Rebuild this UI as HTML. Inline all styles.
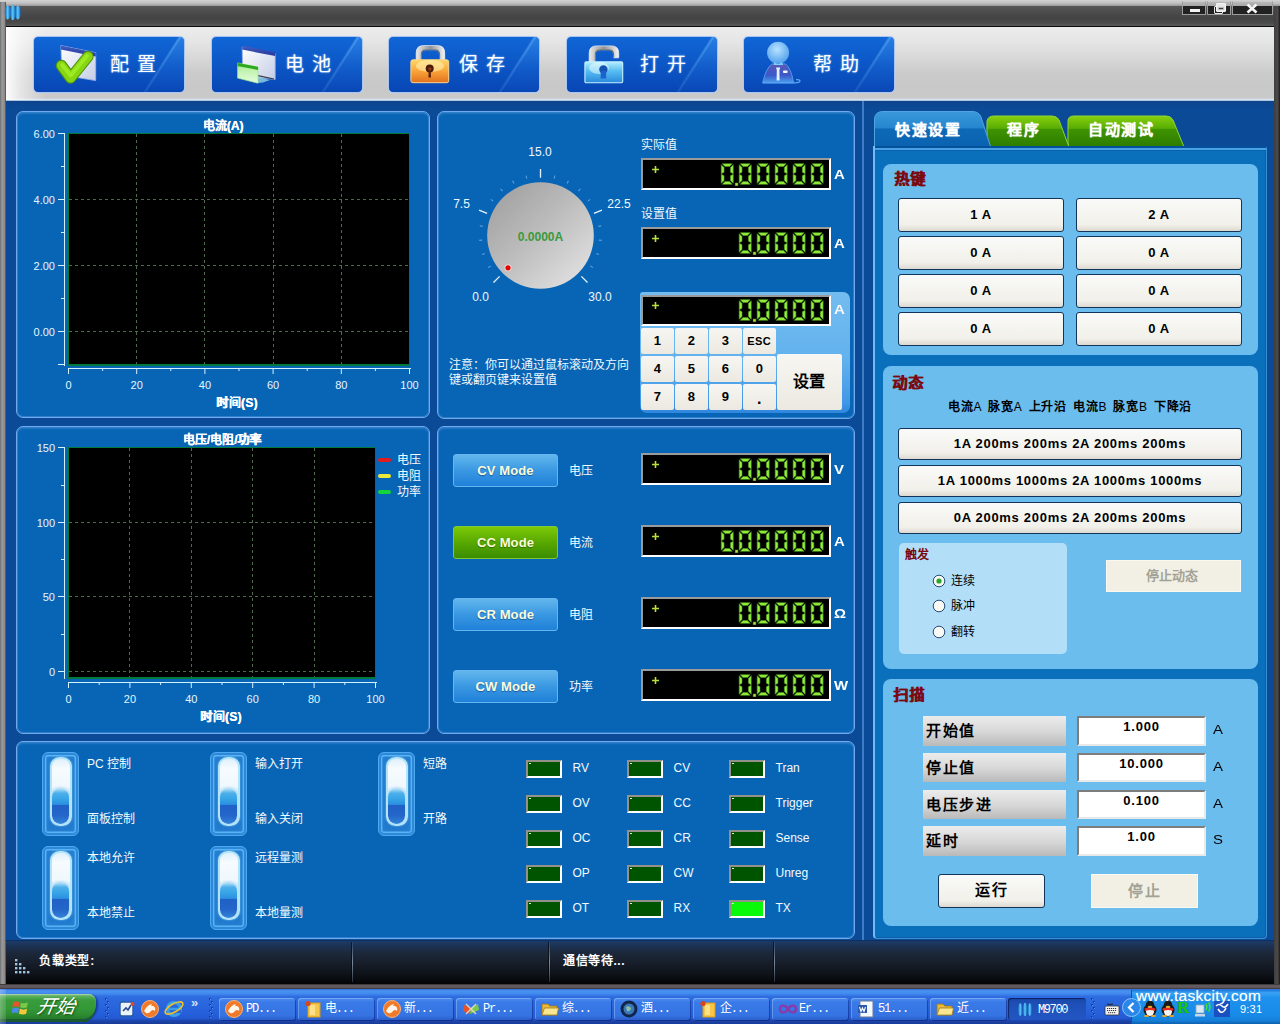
<!DOCTYPE html>
<html lang="zh-CN"><head><meta charset="utf-8"><title>M9700</title>
<style>
html,body{margin:0;padding:0}
body{width:1280px;height:1024px;position:relative;overflow:hidden;background:#0b4a96;
 font-family:"Liberation Sans",sans-serif;font-size:12px;color:#fff}
div{position:absolute;box-sizing:border-box}
svg{position:absolute;overflow:visible}
.t{white-space:nowrap;line-height:14px}
.b{font-weight:bold}
.panel{border:1px solid #70aaec;border-radius:7px;background:#0865b5;
 box-shadow:inset 0 0 0 1px #2f7ecb, inset 0 2px 2px rgba(120,180,240,.25)}
.lcd{background:#000;border:2px solid;border-color:#9a9a9a #fff #fff #9a9a9a}
.tb{border:1px solid #a9c6f2;border-radius:5px;box-shadow:0 0 1px #c8dcf8;overflow:hidden;
 background:linear-gradient(180deg,#1166d6 0%,#0c58c8 45%,#0846b4 100%)}
.tb .sh{left:0;top:0;width:150px;height:55px;clip-path:polygon(146px 0,150px 0,150px 55px,111px 55px);
 background:linear-gradient(180deg,rgba(70,160,245,.42),rgba(40,120,225,.22) 55%,rgba(20,80,200,.05))}
.tb .sl{left:0;top:0;width:150px;height:55px;clip-path:polygon(144.5px 0,147.5px 0,112.5px 55px,109.5px 55px);
 background:linear-gradient(180deg,rgba(120,190,250,.4),rgba(90,160,240,.18));filter:blur(.6px)}
.tbt{font-size:19px;line-height:24px;letter-spacing:8px;font-weight:500;color:#fff;white-space:nowrap;
 text-shadow:0 0 2px #9cf}
.mode{border-radius:3px;border:1px solid #64b6f2;background:linear-gradient(180deg,#62b6ec 0%,#3a98e2 50%,#1f80d8 100%);
 text-align:center;font-weight:bold;font-size:13px;line-height:31px;color:#fcfcdc;letter-spacing:.1px;
 text-shadow:0 1px 1px rgba(0,40,100,.5)}
.mode.g{border-color:#7fc83a;background:linear-gradient(180deg,#7cc908 0%,#58a800 50%,#3b8d00 100%);text-shadow:0 1px 1px rgba(20,60,0,.5)}
.key{background:linear-gradient(180deg,#f7f6f2,#ebe9e0);border-radius:2px;color:#000;text-align:center;
 font-weight:bold;font-size:13px;line-height:26px}
.hb{background:linear-gradient(180deg,#fafaf8 0%,#f1f0ea 80%,#dcdad0 100%);border:1px solid #12345a;border-radius:3px;color:#000;
 text-align:center;font-weight:bold;font-size:13px;line-height:31px;letter-spacing:.6px}
.grp{background:#6bbdee;border-radius:8px}
.gt{font-weight:bold;font-size:15px;line-height:18px;color:#7b0a10;white-space:nowrap;letter-spacing:1px;text-shadow:.5px 0 0 #7b0a10}
.lbl{background:linear-gradient(180deg,#ececec 0%,#d6d6d6 55%,#b9b9b9 100%);color:#000;font-weight:bold;font-size:15px;
 line-height:29px;padding-left:3px;letter-spacing:1.5px;white-space:nowrap}
.inp{background:#fff;border:2px solid;border-color:#7d7d7d #e9e9e9 #e9e9e9 #7d7d7d;color:#000;font-weight:bold;font-size:13px;
 text-align:center;line-height:18px;letter-spacing:.8px}
.led{background:#005400;border:2px solid;border-color:#92928a #fff #fff #92928a}
.sw{border-radius:6px;border:1.5px solid #4ea8f0;background:#2079cc;
 box-shadow:inset 0 0 0 2px #2c88d8, inset 0 0 0 3.4px #5ab2f2, inset 0 0 5px 4px #2c86d6}
.swi{border-radius:9.5px;border:2px solid #b2e4fc;background:linear-gradient(180deg,#dff0fa 0%,#f6fbfe 14%,#f0f8fd 42%,#d4ecfa 50%,#bfe6fb 100%);
 overflow:hidden;box-shadow:0 0 2px #7cc8f8}
.swt{left:.5px;top:30px;width:17px;height:35px;border-radius:8px 8px 8.5px 8.5px;
 background:linear-gradient(180deg,#a8dcf6 0%,#4cb0ea 12%,#36a2e6 30%,#2c90e0 44%,#2160c6 47%,#2466ca 76%,#3484d8 100%);
 box-shadow:0 -1px 3px rgba(120,190,240,.7)}
.task{top:998px;height:22px;width:76px;border-radius:3px;background:linear-gradient(180deg,#4d8df0 0%,#3a7ae8 20%,#3573e2 80%,#2a60cc 100%);
 box-shadow:inset 1px 1px 0 rgba(255,255,255,.25), 1px 1px 0 rgba(0,0,60,.3)}
.task span{position:absolute;left:27px;top:4px;font-size:12px;line-height:14px;color:#fff;white-space:nowrap;font-family:"Liberation Mono",monospace;letter-spacing:-1.2px}
</style></head>
<body>

<svg width="0" height="0" style="left:0;top:0"><defs>
<linearGradient id="wing" x1="0" y1="0" x2="1" y2="1"><stop offset="0" stop-color="#ffffff"/><stop offset="1" stop-color="#c4cde6"/></linearGradient>
<linearGradient id="wint" x1="0" y1="0" x2="0" y2="1"><stop offset="0" stop-color="#4260c4"/><stop offset="1" stop-color="#22369a"/></linearGradient>
<linearGradient id="chk" x1="0" y1="0" x2="0" y2="1"><stop offset="0" stop-color="#b6e62a"/><stop offset=".6" stop-color="#6db40c"/><stop offset="1" stop-color="#4e9208"/></linearGradient>
<linearGradient id="grn" x1="0" y1="0" x2="0" y2="1"><stop offset="0" stop-color="#4fc23c"/><stop offset=".25" stop-color="#b8f0a6"/><stop offset="1" stop-color="#e6ffdc"/></linearGradient>
<linearGradient id="lko" x1="0" y1="0" x2="0" y2="1"><stop offset="0" stop-color="#ffd86a"/><stop offset=".45" stop-color="#fba93c"/><stop offset="1" stop-color="#e2701e"/></linearGradient>
<linearGradient id="lkb" x1="0" y1="0" x2="0" y2="1"><stop offset="0" stop-color="#b4ecff"/><stop offset=".45" stop-color="#56bcf0"/><stop offset="1" stop-color="#2a8ade"/></linearGradient>
<linearGradient id="shk" x1="0" y1="0" x2="1" y2="0"><stop offset="0" stop-color="#e8e8e8"/><stop offset=".5" stop-color="#8e9298"/><stop offset="1" stop-color="#f4f4f4"/></linearGradient>
<radialGradient id="hd" cx=".45" cy=".35" r=".7"><stop offset="0" stop-color="#b8e2ff"/><stop offset="1" stop-color="#4a9cec"/></radialGradient>
<linearGradient id="bd" x1="0" y1="0" x2="0" y2="1"><stop offset="0" stop-color="#5a5ab8"/><stop offset=".6" stop-color="#3a58c8"/><stop offset="1" stop-color="#4aa0f0"/></linearGradient>
</defs></svg>


<svg width="0" height="0" style="left:0;top:0"><defs>
<symbol id="d0" viewBox="0 0 13 22" overflow="visible">
<g fill="#94ee3c" stroke="#4c9a1e" stroke-width=".6" stroke-linejoin="round">
<path d="M1.4 .3 L11.6 .3 L8.9 3.2 L4.1 3.2 Z"/>
<path d="M.3 1.4 L3.2 4.4 L3.2 9.3 L.3 10.7 Z"/>
<path d="M12.7 1.4 L12.7 10.7 L9.8 9.3 L9.8 4.4 Z"/>
<path d="M.3 11.3 L3.2 12.7 L3.2 17.6 L.3 20.6 Z"/>
<path d="M12.7 11.3 L12.7 20.6 L9.8 17.6 L9.8 12.7 Z"/>
<path d="M1.4 21.7 L4.1 18.8 L8.9 18.8 L11.6 21.7 Z"/>
</g></symbol>
</defs></svg>

<div style="left:6px;top:100px;width:1268px;height:842px;background:linear-gradient(180deg,#0a3878 0px,#0c4590 2px,#0b4a96 9px,#0b4a96 100%)"></div>
<div style="left:0px;top:0px;width:1280px;height:6px;background:linear-gradient(180deg,#d4d4d4 0%,#c8c8c8 30%,#c0c0c0 55%,#a8a8a8 80%,#989898 100%)"></div>
<div style="left:0px;top:6px;width:1280px;height:20px;background:linear-gradient(180deg,#585858 0%,#4c4c4c 30%,#434343 60%,#4a4a4a 85%,#5a5a5a 100%)"></div>
<div style="left:0px;top:26px;width:1280px;height:1px;background:#0a0a0a"></div>
<div style="left:0px;top:2px;width:6px;height:988px;background:linear-gradient(90deg,#6a7074 0%,#9b9b9b 35%,#8f8884 80%,#3a3a3a 100%)"></div>
<div style="left:1274px;top:6px;width:6px;height:984px;background:linear-gradient(90deg,#3f3f3f 0%,#4d4948 60%,#1a1a1a 100%)"></div>
<svg style="left:4px;top:4px" width="17.5" height="17" viewBox="0 0 16 16"><defs><linearGradient id="ai" x1="0" x2="1"><stop offset="0" stop-color="#0f5eb0"/><stop offset=".5" stop-color="#5ccaff"/><stop offset="1" stop-color="#0f5eb0"/></linearGradient></defs><ellipse cx="3.2" cy="8" rx="2.7" ry="6.6" fill="url(#ai)"/><ellipse cx="8" cy="8" rx="2.7" ry="7.2" fill="url(#ai)"/><ellipse cx="12.8" cy="8" rx="2.7" ry="6.6" fill="url(#ai)"/></svg>
<div style="left:1182px;top:1px;width:24px;height:14px;background:#222;border:1px solid #9c9c9c;border-top-color:#c9c9c9"><div style="left:0;top:0;width:100%;height:4px;background:linear-gradient(180deg,#cdcdcd,#b9b9b9);opacity:.88"></div><div style="left:7px;top:7px;width:10px;height:3px;background:#f4f4f4"></div></div>
<div style="left:1207px;top:1px;width:24px;height:14px;background:#222;border:1px solid #9c9c9c;border-top-color:#c9c9c9"><div style="left:0;top:0;width:100%;height:4px;background:linear-gradient(180deg,#cdcdcd,#b9b9b9);opacity:.88"></div><div style="left:6px;top:4px;width:9px;height:8px;border:1px solid #e8e8e8;border-radius:1px"></div><div style="left:8px;top:1px;width:10px;height:9px;border:1px solid #f4f4f4;background:#e6e6e6;border-radius:1px"></div><div style="left:10px;top:5px;width:6px;height:3px;background:#3a3a3a;border:1px solid #bbb"></div></div>
<div style="left:1232px;top:1px;width:41px;height:14px;background:#222;border:1px solid #9c9c9c;border-top-color:#c9c9c9"><div style="left:0;top:0;width:100%;height:4px;background:linear-gradient(180deg,#cdcdcd,#b9b9b9);opacity:.88"></div><svg style="left:13px;top:2px" width="12" height="9" viewBox="0 0 12 9"><path d="M1.5 0.5 L10.5 8.5 M10.5 0.5 L1.5 8.5" stroke="#f6f6f6" stroke-width="2.6"/></svg></div>
<div style="left:6px;top:27px;width:1268px;height:74px;background:linear-gradient(180deg,#ececec 0%,#e6e6e6 18%,#d6d6d6 45%,#cbcbcb 62%,#c8c8c8 80%,#c9c9c9 96%,#d4e2f2 98%,#9db8d8 100%)"></div>
<div style="left:6px;top:27px;width:40px;height:73px;background:linear-gradient(90deg,rgba(255,255,255,.95) 0%,rgba(255,255,255,.55) 35%,rgba(255,255,255,0) 100%)"></div>
<div class="tb" style="left:33px;top:36px;width:152px;height:57px;"><div class="sh"></div><div class="sl"></div><svg style="left:23px;top:6px" width="42" height="44" viewBox="0 0 42 44"><path d="M3.9 2.6 L38.7 9.7 L38.7 37.6 L5 32 Z" fill="url(#wing)" stroke="#9fb4ee" stroke-width=".8"/><path d="M3.9 2.6 L38.7 9.7 L38.7 13.4 L3.9 6.6 Z" fill="url(#wint)"/><path d="M4.4 22.5 L13.6 35 L31 13.5" fill="none" stroke="#4e8f12" stroke-width="11.4" stroke-linecap="round" stroke-linejoin="round"/><path d="M4.4 22.5 L13.6 35 L31 13.5" fill="none" stroke="#86d612" stroke-width="9.2" stroke-linecap="round" stroke-linejoin="round"/><path d="M5.2 22 L13.6 32.5 L30 13" fill="none" stroke="#a6f028" stroke-width="3.8" stroke-linecap="round" stroke-linejoin="round" opacity=".75"/></svg><div class="tbt" style="left:76px;top:16px">配置</div></div>
<div class="tb" style="left:211px;top:36px;width:152px;height:57px;"><div class="sh"></div><div class="sl"></div><svg style="left:23px;top:6px" width="42" height="44" viewBox="0 0 42 44"><path d="M7.2 4 L40.2 10.5 L40.2 36.6 L7.7 33 Z" fill="url(#wing)" stroke="#8fb0f0" stroke-width=".8"/><path d="M7.2 4.6 Q7.2 2.2 9.5 2.9 L40.2 9.2 L40.2 13 L7.2 6.6 Z" fill="url(#wint)"/><path d="M23 34.5 L35 37 L28 39.6 L23 40 Z" fill="#a8e8e8" opacity=".7"/><path d="M23 32.6 L39 36.2" stroke="#39404c" stroke-width="1.2"/><path d="M2.6 19.9 L23 23.9 L23 40.2 L2.6 35.1 Z" fill="url(#grn)" stroke="#9fe68c" stroke-width=".7"/><path d="M2.6 19.9 L23 23.9 L23 27 L2.6 23 Z" fill="#2ea81c"/></svg><div class="tbt" style="left:73px;top:16px">电池</div></div>
<div class="tb" style="left:388px;top:36px;width:152px;height:57px;"><div class="sh"></div><div class="sl"></div><svg style="left:21px;top:8px" width="42" height="42" viewBox="0 0 42 42"><path d="M6.2 16 V8 Q6.2 .6 13.5 .6 H27.5 Q34.7 .6 34.7 8 V16 H29.6 V9.5 Q29.6 4.7 24.8 4.7 H16.2 Q11.3 4.7 11.3 9.5 V16 Z" fill="url(#shk)" stroke="#f4f4f8" stroke-width=".7"/><path d="M11.3 16 V9.5 Q11.3 4.7 16.2 4.7 H24.8 Q29.6 4.7 29.6 9.5 V16" fill="none" stroke="#6a6e78" stroke-width="1.1"/><rect x=".9" y="14.8" width="37.8" height="22.9" rx="2" fill="url(#lko)" stroke="#fad68c" stroke-width="1"/><ellipse cx="20" cy="21" rx="14" ry="6" fill="#fff6b8" opacity=".55"/><circle cx="19.7" cy="23.5" r="4" fill="#4a1a08"/><path d="M18.7 25 L18.4 32.6 L21 32.6 L20.7 25 Z" fill="#5a2208"/><circle cx="19.9" cy="23.8" r="1.6" fill="#8a3a12"/></svg><div class="tbt" style="left:70px;top:16px">保存</div></div>
<div class="tb" style="left:566px;top:36px;width:152px;height:57px;"><div class="sh"></div><div class="sl"></div><svg style="left:17px;top:8px" width="42" height="42" viewBox="0 0 42 42"><path d="M5.2 18 V8 Q5.2 .9 12.5 .9 H27.5 Q34.7 .9 34.7 8 V12.8 H29.6 V9.5 Q29.6 4.7 24.8 4.7 H16.2 Q11.3 4.7 11.3 9.5 V18 Z" fill="url(#shk)" stroke="#f4f4f8" stroke-width=".7"/><path d="M11.3 17 V9.5 Q11.3 4.7 16.2 4.7 H24.8 Q29.6 4.7 29.6 9.5 V12.6" fill="none" stroke="#7a6e60" stroke-width="1.1"/><rect x=".9" y="16.9" width="37.8" height="20.8" rx="1.2" fill="url(#lkb)" stroke="#c4f2ff" stroke-width="1.1"/><ellipse cx="15" cy="23" rx="10" ry="6" fill="#e8ffff" opacity=".55"/><circle cx="19.4" cy="24.5" r="4.2" fill="#1552b4"/><path d="M16.8 26 L16.6 33.6 L22.2 33.6 L22 26 Z" fill="#1c62cc"/></svg><div class="tbt" style="left:73px;top:16px">打开</div></div>
<div class="tb" style="left:743px;top:36px;width:152px;height:57px;"><div class="sh"></div><div class="sl"></div><svg style="left:17px;top:4px" width="42" height="46" viewBox="0 0 42 46"><path d="M1.6 41.7 Q5 27 11 22.9 L24.5 22.9 Q30 27 32.6 41.7 Z" fill="url(#bd)" stroke="#5a9cf0" stroke-width=".9"/><circle cx="17.1" cy="11.7" r="11" fill="url(#hd)"/><path d="M13.5 21 Q17 25 21 21 L22 24 L12.5 24 Z" fill="#7ed0f8"/><path d="M15.2 26.6 H19 V28.2 H18.4 L18.6 39.5 L15.6 39.5 L15.8 28.2 H15.2 Z" fill="#e2f0ff"/><rect x="22" y="29.5" width="4.6" height="2.4" rx="1" fill="#f4f8ff"/><path d="M1.6 41.9 H33 Q39 42 39 40 Q39 38.4 35 38.6" fill="none" stroke="#5aa8f4" stroke-width="1.3"/></svg><div class="tbt" style="left:69px;top:16px">帮助</div></div>
<div class="panel" style="left:16px;top:111px;width:414px;height:307px;"><svg style="left:0;top:0" width="412" height="305" viewBox="0 0 412 305"><rect x="51" y="21" width="342" height="233" fill="#000"/><line x1="119.5" y1="22" x2="119.5" y2="253" stroke="#4d6a4a" stroke-width="1" stroke-dasharray="3 3"/><line x1="187.5" y1="22" x2="187.5" y2="253" stroke="#4d6a4a" stroke-width="1" stroke-dasharray="3 3"/><line x1="256.5" y1="22" x2="256.5" y2="253" stroke="#4d6a4a" stroke-width="1" stroke-dasharray="3 3"/><line x1="324.5" y1="22" x2="324.5" y2="253" stroke="#4d6a4a" stroke-width="1" stroke-dasharray="3 3"/><line x1="52" y1="87.5" x2="392" y2="87.5" stroke="#4d6a4a" stroke-width="1" stroke-dasharray="3 3"/><line x1="52" y1="153.5" x2="392" y2="153.5" stroke="#4d6a4a" stroke-width="1" stroke-dasharray="3 3"/><line x1="52" y1="219.5" x2="392" y2="219.5" stroke="#4d6a4a" stroke-width="1" stroke-dasharray="3 3"/><rect x="51.5" y="21.5" width="341" height="232" fill="none" stroke="#007a3c" stroke-width="1"/><line x1="51" y1="252.5" x2="393" y2="252.5" stroke="#007a3c" stroke-width="1"/><line x1="47.5" y1="21" x2="47.5" y2="254" stroke="#d2f2ff" stroke-width="1"/><line x1="41" y1="21.5" x2="48" y2="21.5" stroke="#d2f2ff" stroke-width="1"/><line x1="41" y1="87.5" x2="48" y2="87.5" stroke="#d2f2ff" stroke-width="1"/><line x1="41" y1="153.5" x2="48" y2="153.5" stroke="#d2f2ff" stroke-width="1"/><line x1="41" y1="219.5" x2="48" y2="219.5" stroke="#d2f2ff" stroke-width="1"/><line x1="41" y1="252.5" x2="48" y2="252.5" stroke="#d2f2ff" stroke-width="1"/><line x1="44" y1="54.5" x2="48" y2="54.5" stroke="#d2f2ff" stroke-width="1"/><line x1="44" y1="120.5" x2="48" y2="120.5" stroke="#d2f2ff" stroke-width="1"/><line x1="44" y1="186.5" x2="48" y2="186.5" stroke="#d2f2ff" stroke-width="1"/><line x1="51" y1="256.5" x2="394" y2="256.5" stroke="#d2f2ff" stroke-width="1"/><line x1="51.50" y1="256" x2="51.50" y2="262" stroke="#d2f2ff" stroke-width="1"/><line x1="85.60" y1="256" x2="85.60" y2="259" stroke="#d2f2ff" stroke-width="1"/><line x1="119.70" y1="256" x2="119.70" y2="262" stroke="#d2f2ff" stroke-width="1"/><line x1="153.80" y1="256" x2="153.80" y2="259" stroke="#d2f2ff" stroke-width="1"/><line x1="187.90" y1="256" x2="187.90" y2="262" stroke="#d2f2ff" stroke-width="1"/><line x1="222.00" y1="256" x2="222.00" y2="259" stroke="#d2f2ff" stroke-width="1"/><line x1="256.10" y1="256" x2="256.10" y2="262" stroke="#d2f2ff" stroke-width="1"/><line x1="290.20" y1="256" x2="290.20" y2="259" stroke="#d2f2ff" stroke-width="1"/><line x1="324.30" y1="256" x2="324.30" y2="262" stroke="#d2f2ff" stroke-width="1"/><line x1="358.40" y1="256" x2="358.40" y2="259" stroke="#d2f2ff" stroke-width="1"/><line x1="392.50" y1="256" x2="392.50" y2="262" stroke="#d2f2ff" stroke-width="1"/></svg><div class="t" style="right:374px;top:15px;color:#e4f6ff;font-size:11px">6.00</div><div class="t" style="right:374px;top:80.5px;color:#e4f6ff;font-size:11px">4.00</div><div class="t" style="right:374px;top:146.5px;color:#e4f6ff;font-size:11px">2.00</div><div class="t" style="right:374px;top:212.5px;color:#e4f6ff;font-size:11px">0.00</div><div class="t" style="left:31.0px;width:41px;text-align:center;top:266px;color:#e4f6ff;font-size:11px">0</div><div class="t" style="left:99.2px;width:41px;text-align:center;top:266px;color:#e4f6ff;font-size:11px">20</div><div class="t" style="left:167.4px;width:41px;text-align:center;top:266px;color:#e4f6ff;font-size:11px">40</div><div class="t" style="left:235.6px;width:41px;text-align:center;top:266px;color:#e4f6ff;font-size:11px">60</div><div class="t" style="left:303.8px;width:41px;text-align:center;top:266px;color:#e4f6ff;font-size:11px">80</div><div class="t" style="left:372.0px;width:41px;text-align:center;top:266px;color:#e4f6ff;font-size:11px">100</div><div class="t b" style="left:146px;width:120px;text-align:center;top:7px;text-shadow:.4px 0 0 #fff">电流(A)</div><div class="t b" style="left:160px;width:120px;text-align:center;top:284px;letter-spacing:.3px;text-shadow:.4px 0 0 #fff">时间(S)</div></div>
<div class="panel" style="left:16px;top:426px;width:414px;height:308px;"><svg style="left:0;top:0" width="412" height="306" viewBox="0 0 412 306"><rect x="51" y="20" width="308" height="232" fill="#000"/><line x1="112.5" y1="21" x2="112.5" y2="251" stroke="#4d6a4a" stroke-width="1" stroke-dasharray="3 3"/><line x1="174.5" y1="21" x2="174.5" y2="251" stroke="#4d6a4a" stroke-width="1" stroke-dasharray="3 3"/><line x1="235.5" y1="21" x2="235.5" y2="251" stroke="#4d6a4a" stroke-width="1" stroke-dasharray="3 3"/><line x1="297.5" y1="21" x2="297.5" y2="251" stroke="#4d6a4a" stroke-width="1" stroke-dasharray="3 3"/><line x1="52" y1="95.5" x2="358" y2="95.5" stroke="#4d6a4a" stroke-width="1" stroke-dasharray="3 3"/><line x1="52" y1="169.5" x2="358" y2="169.5" stroke="#4d6a4a" stroke-width="1" stroke-dasharray="3 3"/><line x1="52" y1="244.5" x2="358" y2="244.5" stroke="#4d6a4a" stroke-width="1" stroke-dasharray="3 3"/><rect x="51.5" y="20.5" width="307" height="231" fill="none" stroke="#007a3c" stroke-width="1"/><line x1="51" y1="250.5" x2="359" y2="250.5" stroke="#007a3c" stroke-width="1"/><line x1="47.5" y1="20" x2="47.5" y2="252" stroke="#d2f2ff" stroke-width="1"/><line x1="41" y1="20.5" x2="48" y2="20.5" stroke="#d2f2ff" stroke-width="1"/><line x1="41" y1="95.5" x2="48" y2="95.5" stroke="#d2f2ff" stroke-width="1"/><line x1="41" y1="169.5" x2="48" y2="169.5" stroke="#d2f2ff" stroke-width="1"/><line x1="41" y1="244.5" x2="48" y2="244.5" stroke="#d2f2ff" stroke-width="1"/><line x1="44" y1="58.5" x2="48" y2="58.5" stroke="#d2f2ff" stroke-width="1"/><line x1="44" y1="132.5" x2="48" y2="132.5" stroke="#d2f2ff" stroke-width="1"/><line x1="44" y1="207.5" x2="48" y2="207.5" stroke="#d2f2ff" stroke-width="1"/><line x1="51" y1="255.5" x2="360" y2="255.5" stroke="#d2f2ff" stroke-width="1"/><line x1="51.50" y1="255" x2="51.50" y2="261" stroke="#d2f2ff" stroke-width="1"/><line x1="82.20" y1="255" x2="82.20" y2="258" stroke="#d2f2ff" stroke-width="1"/><line x1="112.90" y1="255" x2="112.90" y2="261" stroke="#d2f2ff" stroke-width="1"/><line x1="143.60" y1="255" x2="143.60" y2="258" stroke="#d2f2ff" stroke-width="1"/><line x1="174.30" y1="255" x2="174.30" y2="261" stroke="#d2f2ff" stroke-width="1"/><line x1="205.00" y1="255" x2="205.00" y2="258" stroke="#d2f2ff" stroke-width="1"/><line x1="235.70" y1="255" x2="235.70" y2="261" stroke="#d2f2ff" stroke-width="1"/><line x1="266.40" y1="255" x2="266.40" y2="258" stroke="#d2f2ff" stroke-width="1"/><line x1="297.10" y1="255" x2="297.10" y2="261" stroke="#d2f2ff" stroke-width="1"/><line x1="327.80" y1="255" x2="327.80" y2="258" stroke="#d2f2ff" stroke-width="1"/><line x1="358.50" y1="255" x2="358.50" y2="261" stroke="#d2f2ff" stroke-width="1"/></svg><div class="t" style="right:374px;top:13.5px;color:#e4f6ff;font-size:11px">150</div><div class="t" style="right:374px;top:88.5px;color:#e4f6ff;font-size:11px">100</div><div class="t" style="right:374px;top:162.5px;color:#e4f6ff;font-size:11px">50</div><div class="t" style="right:374px;top:237.5px;color:#e4f6ff;font-size:11px">0</div><div class="t" style="left:31.0px;width:41px;text-align:center;top:264.5px;color:#e4f6ff;font-size:11px">0</div><div class="t" style="left:92.4px;width:41px;text-align:center;top:264.5px;color:#e4f6ff;font-size:11px">20</div><div class="t" style="left:153.8px;width:41px;text-align:center;top:264.5px;color:#e4f6ff;font-size:11px">40</div><div class="t" style="left:215.2px;width:41px;text-align:center;top:264.5px;color:#e4f6ff;font-size:11px">60</div><div class="t" style="left:276.6px;width:41px;text-align:center;top:264.5px;color:#e4f6ff;font-size:11px">80</div><div class="t" style="left:338.0px;width:41px;text-align:center;top:264.5px;color:#e4f6ff;font-size:11px">100</div><div class="t b" style="left:145px;width:120px;text-align:center;top:6px;text-shadow:.4px 0 0 #fff">电压/电阻/功率</div><div class="t b" style="left:144px;width:120px;text-align:center;top:283px;letter-spacing:.3px;text-shadow:.4px 0 0 #fff">时间(S)</div><div style="left:361px;top:31px;width:13px;height:4px;background:#e21c1c;border-radius:2px"></div><div class="t" style="left:380px;top:26px;color:#f2fbff">电压</div><div style="left:361px;top:47px;width:13px;height:4px;background:#ece83a;border-radius:2px"></div><div class="t" style="left:380px;top:42px;color:#f2fbff">电阻</div><div style="left:361px;top:63px;width:13px;height:4px;background:#14d43a;border-radius:2px"></div><div class="t" style="left:380px;top:58px;color:#f2fbff">功率</div></div>
<div class="panel" style="left:437px;top:111px;width:418px;height:308px;"></div>
<svg style="left:0;top:0" width="1280" height="1024" viewBox="0 0 1280 1024"><defs><linearGradient id="kg" x1="0.1" y1="0.1" x2="0.9" y2="0.95"><stop offset="0" stop-color="#a2a2a2"/><stop offset=".45" stop-color="#bcbcbc"/><stop offset="1" stop-color="#e2e2e2"/></linearGradient></defs><line x1="499.63" y1="276.37" x2="493.48" y2="282.52" stroke="#e6f4ff" stroke-width="1.3"/><line x1="490.62" y1="266.07" x2="488.06" y2="267.63" stroke="#5aa0e0" stroke-width="1.1"/><line x1="484.86" y1="253.58" x2="482.01" y2="254.50" stroke="#5aa0e0" stroke-width="1.1"/><line x1="482.18" y1="240.09" x2="479.19" y2="240.33" stroke="#5aa0e0" stroke-width="1.1"/><line x1="482.72" y1="226.35" x2="479.76" y2="225.88" stroke="#5aa0e0" stroke-width="1.1"/><line x1="487.10" y1="213.38" x2="479.06" y2="210.05" stroke="#e6f4ff" stroke-width="1.3"/><line x1="493.17" y1="201.11" x2="490.75" y2="199.35" stroke="#5aa0e0" stroke-width="1.1"/><line x1="502.51" y1="191.02" x2="500.56" y2="188.74" stroke="#5aa0e0" stroke-width="1.1"/><line x1="513.94" y1="183.38" x2="512.58" y2="180.70" stroke="#5aa0e0" stroke-width="1.1"/><line x1="526.84" y1="178.62" x2="526.14" y2="175.70" stroke="#5aa0e0" stroke-width="1.1"/><line x1="540.50" y1="177.70" x2="540.50" y2="169.00" stroke="#e6f4ff" stroke-width="1.3"/><line x1="554.16" y1="178.62" x2="554.86" y2="175.70" stroke="#5aa0e0" stroke-width="1.1"/><line x1="567.06" y1="183.38" x2="568.42" y2="180.70" stroke="#5aa0e0" stroke-width="1.1"/><line x1="578.49" y1="191.02" x2="580.44" y2="188.74" stroke="#5aa0e0" stroke-width="1.1"/><line x1="587.83" y1="201.11" x2="590.25" y2="199.35" stroke="#5aa0e0" stroke-width="1.1"/><line x1="593.90" y1="213.38" x2="601.94" y2="210.05" stroke="#e6f4ff" stroke-width="1.3"/><line x1="598.28" y1="226.35" x2="601.24" y2="225.88" stroke="#5aa0e0" stroke-width="1.1"/><line x1="598.82" y1="240.09" x2="601.81" y2="240.33" stroke="#5aa0e0" stroke-width="1.1"/><line x1="596.14" y1="253.58" x2="598.99" y2="254.50" stroke="#5aa0e0" stroke-width="1.1"/><line x1="590.38" y1="266.07" x2="592.94" y2="267.63" stroke="#5aa0e0" stroke-width="1.1"/><line x1="581.37" y1="276.37" x2="587.52" y2="282.52" stroke="#e6f4ff" stroke-width="1.3"/><circle cx="540.5" cy="235.5" r="53.3" fill="url(#kg)"/><circle cx="508" cy="267.8" r="3.4" fill="#f4e6e0"/><circle cx="508" cy="267.8" r="2.6" fill="#e80000"/></svg><div class="t" style="left:510px;width:60px;text-align:center;top:145px;color:#eef8ff">15.0</div><div class="t" style="left:431.5px;width:60px;text-align:center;top:197px;color:#eef8ff">7.5</div><div class="t" style="left:589px;width:60px;text-align:center;top:197px;color:#eef8ff">22.5</div><div class="t" style="left:450.5px;width:60px;text-align:center;top:290px;color:#eef8ff">0.0</div><div class="t" style="left:570px;width:60px;text-align:center;top:290px;color:#eef8ff">30.0</div><div class="t b" style="left:500px;width:81px;text-align:center;top:230px;color:#3a9a3c">0.0000A</div>
<div class="t" style="left:641px;top:138px;color:#eef8ff">实际值</div>
<div class="lcd" style="left:641px;top:158px;width:190px;height:32px;"><svg style="left:-2px;top:-2px" width="190" height="32" viewBox="0 0 190 32"><use href="#d0" x="169.80" y="5" width="12.6" height="22"/><use href="#d0" x="151.83" y="5" width="12.6" height="22"/><use href="#d0" x="133.86" y="5" width="12.6" height="22"/><use href="#d0" x="115.89" y="5" width="12.6" height="22"/><use href="#d0" x="97.92" y="5" width="12.6" height="22"/><use href="#d0" x="79.95" y="5" width="12.6" height="22"/><rect x="94.15" y="25" width="2.8" height="2.8" fill="#b4e63c" stroke="#5a8f1e" stroke-width=".5"/><path d="M11 11.5 H18 M14.5 8 V15" stroke="#b6e23a" stroke-width="1.6" fill="none"/></svg></div>
<div class="t" style="left:834px;top:167px;font-weight:bold;font-size:13px;line-height:15px;transform:scaleX(1.15);transform-origin:0 0">A</div>
<div class="t" style="left:641px;top:207px;color:#eef8ff">设置值</div>
<div class="lcd" style="left:641px;top:227px;width:190px;height:32px;"><svg style="left:-2px;top:-2px" width="190" height="32" viewBox="0 0 190 32"><use href="#d0" x="169.80" y="5" width="12.6" height="22"/><use href="#d0" x="151.83" y="5" width="12.6" height="22"/><use href="#d0" x="133.86" y="5" width="12.6" height="22"/><use href="#d0" x="115.89" y="5" width="12.6" height="22"/><use href="#d0" x="97.92" y="5" width="12.6" height="22"/><rect x="112.12" y="25" width="2.8" height="2.8" fill="#b4e63c" stroke="#5a8f1e" stroke-width=".5"/><path d="M11 11.5 H18 M14.5 8 V15" stroke="#b6e23a" stroke-width="1.6" fill="none"/></svg></div>
<div class="t" style="left:834px;top:236px;font-weight:bold;font-size:13px;line-height:15px;transform:scaleX(1.15);transform-origin:0 0">A</div>
<div class="t" style="left:449px;top:358px;color:#eef8ff;line-height:15px">注意：你可以通过鼠标滚动及方向</div>
<div class="t" style="left:449px;top:373px;color:#eef8ff;line-height:15px">键或翻页键来设置值</div>
<div style="left:640px;top:292px;width:210px;height:121px;border-radius:3px 7px 7px 7px;background:linear-gradient(180deg,#74bcf0 0%,#62b2ee 55%,#4097e6 92%,#2f86de 100%)"></div>
<div class="lcd" style="left:641px;top:295px;width:190px;height:31px;"><svg style="left:-2px;top:-2px" width="190" height="31" viewBox="0 0 190 31"><use href="#d0" x="169.80" y="4" width="12.6" height="22"/><use href="#d0" x="151.83" y="4" width="12.6" height="22"/><use href="#d0" x="133.86" y="4" width="12.6" height="22"/><use href="#d0" x="115.89" y="4" width="12.6" height="22"/><use href="#d0" x="97.92" y="4" width="12.6" height="22"/><rect x="112.12" y="24" width="2.8" height="2.8" fill="#b4e63c" stroke="#5a8f1e" stroke-width=".5"/><path d="M11 10.5 H18 M14.5 7 V14" stroke="#b6e23a" stroke-width="1.6" fill="none"/></svg></div>
<div class="t" style="left:834px;top:302px;font-weight:bold;font-size:13px;line-height:15px;transform:scaleX(1.15);transform-origin:0 0;color:#f4faff">A</div>
<div class="key" style="left:641px;top:328px;width:32.5px;height:26px;">1</div>
<div class="key" style="left:675px;top:328px;width:32.5px;height:26px;">2</div>
<div class="key" style="left:709px;top:328px;width:32.5px;height:26px;">3</div>
<div class="key" style="left:743px;top:328px;width:32.5px;height:26px;font-size:11px;letter-spacing:.5px;font-weight:bold">ESC</div>
<div class="key" style="left:641px;top:356px;width:32.5px;height:26px;">4</div>
<div class="key" style="left:675px;top:356px;width:32.5px;height:26px;">5</div>
<div class="key" style="left:709px;top:356px;width:32.5px;height:26px;">6</div>
<div class="key" style="left:743px;top:356px;width:32.5px;height:26px;">0</div>
<div class="key" style="left:641px;top:384px;width:32.5px;height:26px;">7</div>
<div class="key" style="left:675px;top:384px;width:32.5px;height:26px;">8</div>
<div class="key" style="left:709px;top:384px;width:32.5px;height:26px;">9</div>
<div class="key" style="left:743px;top:384px;width:32.5px;height:26px;font-size:16px;line-height:30px">.</div>
<div class="key" style="left:777px;top:354px;width:65px;height:56px;font-size:16px;line-height:55px;letter-spacing:0;padding-right:2px">设置</div>
<div class="panel" style="left:437px;top:426px;width:418px;height:308px;"></div>
<div class="mode" style="left:453px;top:454px;width:105px;height:33px;">CV Mode</div>
<div class="t" style="left:569px;top:463.5px;color:#f2faff">电压</div>
<div class="lcd" style="left:641px;top:453px;width:190px;height:32px;"><svg style="left:-2px;top:-2px" width="190" height="32" viewBox="0 0 190 32"><use href="#d0" x="169.80" y="5" width="12.6" height="22"/><use href="#d0" x="151.83" y="5" width="12.6" height="22"/><use href="#d0" x="133.86" y="5" width="12.6" height="22"/><use href="#d0" x="115.89" y="5" width="12.6" height="22"/><use href="#d0" x="97.92" y="5" width="12.6" height="22"/><rect x="112.12" y="25" width="2.8" height="2.8" fill="#b4e63c" stroke="#5a8f1e" stroke-width=".5"/><path d="M11 11.5 H18 M14.5 8 V15" stroke="#b6e23a" stroke-width="1.6" fill="none"/></svg></div>
<div class="t" style="left:834px;top:462px;font-weight:bold;font-size:13px;line-height:15px;transform:scaleX(1.15);transform-origin:0 0">V</div>
<div class="mode g" style="left:453px;top:526px;width:105px;height:33px;">CC Mode</div>
<div class="t" style="left:569px;top:535.5px;color:#f2faff">电流</div>
<div class="lcd" style="left:641px;top:525px;width:190px;height:32px;"><svg style="left:-2px;top:-2px" width="190" height="32" viewBox="0 0 190 32"><use href="#d0" x="169.80" y="5" width="12.6" height="22"/><use href="#d0" x="151.83" y="5" width="12.6" height="22"/><use href="#d0" x="133.86" y="5" width="12.6" height="22"/><use href="#d0" x="115.89" y="5" width="12.6" height="22"/><use href="#d0" x="97.92" y="5" width="12.6" height="22"/><use href="#d0" x="79.95" y="5" width="12.6" height="22"/><rect x="94.15" y="25" width="2.8" height="2.8" fill="#b4e63c" stroke="#5a8f1e" stroke-width=".5"/><path d="M11 11.5 H18 M14.5 8 V15" stroke="#b6e23a" stroke-width="1.6" fill="none"/></svg></div>
<div class="t" style="left:834px;top:534px;font-weight:bold;font-size:13px;line-height:15px;transform:scaleX(1.15);transform-origin:0 0">A</div>
<div class="mode" style="left:453px;top:598px;width:105px;height:33px;">CR Mode</div>
<div class="t" style="left:569px;top:607.5px;color:#f2faff">电阻</div>
<div class="lcd" style="left:641px;top:597px;width:190px;height:32px;"><svg style="left:-2px;top:-2px" width="190" height="32" viewBox="0 0 190 32"><use href="#d0" x="169.80" y="5" width="12.6" height="22"/><use href="#d0" x="151.83" y="5" width="12.6" height="22"/><use href="#d0" x="133.86" y="5" width="12.6" height="22"/><use href="#d0" x="115.89" y="5" width="12.6" height="22"/><use href="#d0" x="97.92" y="5" width="12.6" height="22"/><rect x="112.12" y="25" width="2.8" height="2.8" fill="#b4e63c" stroke="#5a8f1e" stroke-width=".5"/><path d="M11 11.5 H18 M14.5 8 V15" stroke="#b6e23a" stroke-width="1.6" fill="none"/></svg></div>
<div class="t" style="left:834px;top:606px;font-weight:bold;font-size:13px;line-height:15px;transform:scaleX(1.15);transform-origin:0 0">Ω</div>
<div class="mode" style="left:453px;top:670px;width:105px;height:33px;">CW Mode</div>
<div class="t" style="left:569px;top:679.5px;color:#f2faff">功率</div>
<div class="lcd" style="left:641px;top:669px;width:190px;height:32px;"><svg style="left:-2px;top:-2px" width="190" height="32" viewBox="0 0 190 32"><use href="#d0" x="169.80" y="5" width="12.6" height="22"/><use href="#d0" x="151.83" y="5" width="12.6" height="22"/><use href="#d0" x="133.86" y="5" width="12.6" height="22"/><use href="#d0" x="115.89" y="5" width="12.6" height="22"/><use href="#d0" x="97.92" y="5" width="12.6" height="22"/><rect x="112.12" y="25" width="2.8" height="2.8" fill="#b4e63c" stroke="#5a8f1e" stroke-width=".5"/><path d="M11 11.5 H18 M14.5 8 V15" stroke="#b6e23a" stroke-width="1.6" fill="none"/></svg></div>
<div class="t" style="left:834px;top:678px;font-weight:bold;font-size:13px;line-height:15px;transform:scaleX(1.15);transform-origin:0 0">W</div>
<div class="panel" style="left:16px;top:741px;width:839px;height:198px;"></div>
<div class="sw" style="left:42px;top:752px;width:37px;height:84px;"><div class="swi" style="left:6.5px;top:3.5px;width:22px;height:69px;"><div class="swt"></div></div></div>
<div class="t" style="left:87px;top:757px;color:#f2faff">PC 控制</div>
<div class="t" style="left:87px;top:812px;color:#f2faff">面板控制</div>
<div class="sw" style="left:210px;top:752px;width:37px;height:84px;"><div class="swi" style="left:6.5px;top:3.5px;width:22px;height:69px;"><div class="swt"></div></div></div>
<div class="t" style="left:255px;top:757px;color:#f2faff">输入打开</div>
<div class="t" style="left:255px;top:812px;color:#f2faff">输入关闭</div>
<div class="sw" style="left:378px;top:752px;width:37px;height:84px;"><div class="swi" style="left:6.5px;top:3.5px;width:22px;height:69px;"><div class="swt"></div></div></div>
<div class="t" style="left:423px;top:757px;color:#f2faff">短路</div>
<div class="t" style="left:423px;top:812px;color:#f2faff">开路</div>
<div class="sw" style="left:42px;top:846px;width:37px;height:84px;"><div class="swi" style="left:6.5px;top:3.5px;width:22px;height:69px;"><div class="swt"></div></div></div>
<div class="t" style="left:87px;top:851px;color:#f2faff">本地允许</div>
<div class="t" style="left:87px;top:906px;color:#f2faff">本地禁止</div>
<div class="sw" style="left:210px;top:846px;width:37px;height:84px;"><div class="swi" style="left:6.5px;top:3.5px;width:22px;height:69px;"><div class="swt"></div></div></div>
<div class="t" style="left:255px;top:851px;color:#f2faff">远程量测</div>
<div class="t" style="left:255px;top:906px;color:#f2faff">本地量测</div>
<div class="led" style="left:526px;top:760px;width:36px;height:18px;"><div style="left:1px;top:1px;width:2px;height:1px;background:#e8f0e0"></div></div>
<div class="t" style="left:572.5px;top:761px;font-size:12px;line-height:15px;color:#f2faff">RV</div>
<div class="led" style="left:526px;top:795px;width:36px;height:18px;"><div style="left:1px;top:1px;width:2px;height:1px;background:#e8f0e0"></div></div>
<div class="t" style="left:572.5px;top:796px;font-size:12px;line-height:15px;color:#f2faff">OV</div>
<div class="led" style="left:526px;top:830px;width:36px;height:18px;"><div style="left:1px;top:1px;width:2px;height:1px;background:#e8f0e0"></div></div>
<div class="t" style="left:572.5px;top:831px;font-size:12px;line-height:15px;color:#f2faff">OC</div>
<div class="led" style="left:526px;top:865px;width:36px;height:18px;"><div style="left:1px;top:1px;width:2px;height:1px;background:#e8f0e0"></div></div>
<div class="t" style="left:572.5px;top:866px;font-size:12px;line-height:15px;color:#f2faff">OP</div>
<div class="led" style="left:526px;top:900px;width:36px;height:18px;"><div style="left:1px;top:1px;width:2px;height:1px;background:#e8f0e0"></div></div>
<div class="t" style="left:572.5px;top:901px;font-size:12px;line-height:15px;color:#f2faff">OT</div>
<div class="led" style="left:627px;top:760px;width:36px;height:18px;"><div style="left:1px;top:1px;width:2px;height:1px;background:#e8f0e0"></div></div>
<div class="t" style="left:673.5px;top:761px;font-size:12px;line-height:15px;color:#f2faff">CV</div>
<div class="led" style="left:627px;top:795px;width:36px;height:18px;"><div style="left:1px;top:1px;width:2px;height:1px;background:#e8f0e0"></div></div>
<div class="t" style="left:673.5px;top:796px;font-size:12px;line-height:15px;color:#f2faff">CC</div>
<div class="led" style="left:627px;top:830px;width:36px;height:18px;"><div style="left:1px;top:1px;width:2px;height:1px;background:#e8f0e0"></div></div>
<div class="t" style="left:673.5px;top:831px;font-size:12px;line-height:15px;color:#f2faff">CR</div>
<div class="led" style="left:627px;top:865px;width:36px;height:18px;"><div style="left:1px;top:1px;width:2px;height:1px;background:#e8f0e0"></div></div>
<div class="t" style="left:673.5px;top:866px;font-size:12px;line-height:15px;color:#f2faff">CW</div>
<div class="led" style="left:627px;top:900px;width:36px;height:18px;"><div style="left:1px;top:1px;width:2px;height:1px;background:#e8f0e0"></div></div>
<div class="t" style="left:673.5px;top:901px;font-size:12px;line-height:15px;color:#f2faff">RX</div>
<div class="led" style="left:729px;top:760px;width:36px;height:18px;"><div style="left:1px;top:1px;width:2px;height:1px;background:#e8f0e0"></div></div>
<div class="t" style="left:775.5px;top:761px;font-size:12px;line-height:15px;color:#f2faff">Tran</div>
<div class="led" style="left:729px;top:795px;width:36px;height:18px;"><div style="left:1px;top:1px;width:2px;height:1px;background:#e8f0e0"></div></div>
<div class="t" style="left:775.5px;top:796px;font-size:12px;line-height:15px;color:#f2faff">Trigger</div>
<div class="led" style="left:729px;top:830px;width:36px;height:18px;"><div style="left:1px;top:1px;width:2px;height:1px;background:#e8f0e0"></div></div>
<div class="t" style="left:775.5px;top:831px;font-size:12px;line-height:15px;color:#f2faff">Sense</div>
<div class="led" style="left:729px;top:865px;width:36px;height:18px;"><div style="left:1px;top:1px;width:2px;height:1px;background:#e8f0e0"></div></div>
<div class="t" style="left:775.5px;top:866px;font-size:12px;line-height:15px;color:#f2faff">Unreg</div>
<div class="led" style="left:729px;top:900px;width:36px;height:18px;background:#08fa08"><div style="left:1px;top:1px;width:2px;height:1px;background:#e8f0e0"></div></div>
<div class="t" style="left:775.5px;top:901px;font-size:12px;line-height:15px;color:#f2faff">TX</div>
<svg style="left:0;top:0" width="1280" height="200" viewBox="0 0 1280 200"><defs><linearGradient id="tba" x1="0" y1="0" x2="0" y2="1"><stop offset="0" stop-color="#3a98da"/><stop offset=".46" stop-color="#2486cf"/><stop offset=".47" stop-color="#0d69b6"/><stop offset="1" stop-color="#0a62b0"/></linearGradient><linearGradient id="tbg" x1="0" y1="0" x2="0" y2="1"><stop offset="0" stop-color="#86d00c"/><stop offset=".40" stop-color="#58ac04"/><stop offset=".42" stop-color="#3f9400"/><stop offset="1" stop-color="#2c7c00"/></linearGradient></defs><path d="M1068 147 L1068 121 Q1068 116 1074 116 L1166 116 Q1171 116 1173 120 L1184 147 Z" fill="url(#tbg)" stroke="#8fd43a" stroke-width="1"/><path d="M987 147 L987 121 Q988 116 994 116 L1052 116 Q1057 116 1059 120 L1069 147 Z" fill="url(#tbg)" stroke="#8fd43a" stroke-width="1"/><path d="M874.5 148 L874.5 119 Q875 111.5 883 111.5 L972 111.5 Q979 111.5 981 117 L991 148 Z" fill="url(#tba)" stroke="#4fa4e2" stroke-width="1"/></svg>
<div class="t" style="left:895px;top:121px;font-weight:bold;font-size:15px;line-height:18px;letter-spacing:1.6px;color:#fff;text-shadow:0 0 1px #fff">快速设置</div>
<div class="t" style="left:1007px;top:121px;font-weight:bold;font-size:15px;line-height:18px;letter-spacing:1.6px;color:#fff;text-shadow:0 0 1px #fff">程序</div>
<div class="t" style="left:1088px;top:121px;font-weight:bold;font-size:15px;line-height:18px;letter-spacing:1.6px;color:#fff;text-shadow:0 0 1px #fff">自动测试</div>
<div style="left:873px;top:146px;width:394px;height:793px;background:#0a70bc;border:1px solid #3d8fd4;border-left:2px solid #6fbcf8;border-top:0;border-radius:0 3px 4px 4px;box-shadow:inset -1px -1px 0 #0b5fa8"></div>
<div style="left:875px;top:146px;width:391px;height:2px;background:#05509a"></div>
<div style="left:875px;top:148px;width:391px;height:2px;background:#49a2e4"></div>
<div style="left:875px;top:150px;width:391px;height:1px;background:#0a62ae"></div>
<div style="left:862px;top:101px;width:2px;height:839px;background:#3f7cc6"></div>
<div class="grp" style="left:883px;top:164px;width:375px;height:191px;"></div>
<div class="gt" style="left:894px;top:170px;">热键</div>
<div class="hb" style="left:898px;top:198px;width:166px;height:34px;">1 A</div>
<div class="hb" style="left:1076px;top:198px;width:166px;height:34px;">2 A</div>
<div class="hb" style="left:898px;top:236px;width:166px;height:34px;">0 A</div>
<div class="hb" style="left:1076px;top:236px;width:166px;height:34px;">0 A</div>
<div class="hb" style="left:898px;top:274px;width:166px;height:34px;">0 A</div>
<div class="hb" style="left:1076px;top:274px;width:166px;height:34px;">0 A</div>
<div class="hb" style="left:898px;top:312px;width:166px;height:34px;">0 A</div>
<div class="hb" style="left:1076px;top:312px;width:166px;height:34px;">0 A</div>
<div class="grp" style="left:883px;top:366px;width:375px;height:303px;"></div>
<div class="gt" style="left:892px;top:374px;">动态</div>
<div class="t" style="left:948px;top:400px;color:#000;font-weight:bold;letter-spacing:.75px;word-spacing:2px">电流<span style="font-weight:normal">A</span> 脉宽<span style="font-weight:normal">A</span> 上升沿 电流<span style="font-weight:normal">B</span> 脉宽<span style="font-weight:normal">B</span> 下降沿</div>
<div class="hb" style="left:898px;top:427.5px;width:344px;height:32.5px;line-height:30px;font-size:13px;letter-spacing:.7px">1A 200ms 200ms 2A 200ms 200ms</div>
<div class="hb" style="left:898px;top:464.5px;width:344px;height:32.5px;line-height:30px;font-size:13px;letter-spacing:.7px">1A 1000ms 1000ms 2A 1000ms 1000ms</div>
<div class="hb" style="left:898px;top:501.5px;width:344px;height:32.5px;line-height:30px;font-size:13px;letter-spacing:.7px">0A 200ms 200ms 2A 200ms 200ms</div>
<div style="left:899px;top:543px;width:168px;height:111px;background:#b3def8;border-radius:5px"></div>
<div class="t" style="left:905px;top:548px;font-weight:bold;color:#7b0a10">触发</div>
<svg style="left:932px;top:573.5px" width="14" height="14" viewBox="0 0 14 14"><circle cx="7" cy="7" r="5.8" fill="#f8f8f4" stroke="#2a4a78" stroke-width="1"/><circle cx="7" cy="7" r="2.6" fill="#2aa52a"/></svg>
<div class="t" style="left:951px;top:573.5px;color:#000">连续</div>
<svg style="left:932px;top:598.5px" width="14" height="14" viewBox="0 0 14 14"><circle cx="7" cy="7" r="5.8" fill="#f8f8f4" stroke="#2a4a78" stroke-width="1"/></svg>
<div class="t" style="left:951px;top:598.5px;color:#000">脉冲</div>
<svg style="left:932px;top:624.5px" width="14" height="14" viewBox="0 0 14 14"><circle cx="7" cy="7" r="5.8" fill="#f8f8f4" stroke="#2a4a78" stroke-width="1"/></svg>
<div class="t" style="left:951px;top:624.5px;color:#000">翻转</div>
<div style="left:1106px;top:560px;width:135px;height:32px;background:#f2f0e5;border:1px solid #f9f8f1;color:#a2a296;font-weight:bold;text-align:center;line-height:30px;font-size:13px;padding-right:4px">停止动态</div>
<div class="grp" style="left:883px;top:679px;width:375px;height:247px;"></div>
<div class="gt" style="left:893px;top:686px;">扫描</div>
<div class="lbl" style="left:923px;top:716.3px;width:143px;height:29.5px;">开始值</div>
<div class="inp" style="left:1077px;top:716.3px;width:129px;height:29.5px;">1.000</div>
<div class="t" style="left:1213px;top:722.3px;color:#000;font-size:13px;line-height:15px;transform:scaleX(1.15);transform-origin:0 0">A</div>
<div class="lbl" style="left:923px;top:752.9px;width:143px;height:29.5px;">停止值</div>
<div class="inp" style="left:1077px;top:752.9px;width:129px;height:29.5px;">10.000</div>
<div class="t" style="left:1213px;top:758.9px;color:#000;font-size:13px;line-height:15px;transform:scaleX(1.15);transform-origin:0 0">A</div>
<div class="lbl" style="left:923px;top:789.5px;width:143px;height:29.5px;">电压步进</div>
<div class="inp" style="left:1077px;top:789.5px;width:129px;height:29.5px;">0.100</div>
<div class="t" style="left:1213px;top:795.5px;color:#000;font-size:13px;line-height:15px;transform:scaleX(1.15);transform-origin:0 0">A</div>
<div class="lbl" style="left:923px;top:826.0999999999999px;width:143px;height:29.5px;">延时</div>
<div class="inp" style="left:1077px;top:826.0999999999999px;width:129px;height:29.5px;">1.00</div>
<div class="t" style="left:1213px;top:832.0999999999999px;color:#000;font-size:13px;line-height:15px;transform:scaleX(1.15);transform-origin:0 0">S</div>
<div class="hb" style="left:938px;top:874px;width:107px;height:34px;line-height:30px;font-size:15px;letter-spacing:1.5px;font-weight:bold">运行</div>
<div style="left:1091px;top:874px;width:107px;height:34px;background:#f2f0e5;border:1px solid #f9f8f1;color:#a2a296;font-weight:bold;text-align:center;line-height:31px;font-size:15px;letter-spacing:1.5px">停止</div>
<div style="left:6px;top:940px;width:1268px;height:44px;background:linear-gradient(180deg,#0a2c5e 0%,#1d3b66 4%,#1c3152 14%,#1c283a 30%,#181f2b 50%,#0e1219 78%,#030406 100%)"></div>
<div style="left:352px;top:942px;width:1px;height:40px;background:linear-gradient(180deg,rgba(90,110,140,.25),rgba(135,150,170,.9) 50%,rgba(90,100,120,.45))"></div>
<div style="left:351px;top:942px;width:1px;height:40px;background:rgba(0,0,0,.55)"></div>
<div style="left:549px;top:942px;width:1px;height:40px;background:linear-gradient(180deg,rgba(90,110,140,.25),rgba(135,150,170,.9) 50%,rgba(90,100,120,.45))"></div>
<div style="left:548px;top:942px;width:1px;height:40px;background:rgba(0,0,0,.55)"></div>
<div style="left:774px;top:942px;width:1px;height:40px;background:linear-gradient(180deg,rgba(90,110,140,.25),rgba(135,150,170,.9) 50%,rgba(90,100,120,.45))"></div>
<div style="left:773px;top:942px;width:1px;height:40px;background:rgba(0,0,0,.55)"></div>
<div class="t" style="left:39px;top:954px;font-weight:bold;color:#fff;letter-spacing:.8px">负载类型:</div>
<div class="t" style="left:563px;top:954px;font-weight:bold;color:#fff;letter-spacing:.6px">通信等待...</div>
<svg style="left:15px;top:959px" width="16" height="16" viewBox="0 0 16 16"><rect x="0" y="0" width="2.4" height="2.4" fill="#9fc4e0"/><rect x="0" y="4" width="2.4" height="2.4" fill="#9fc4e0"/><rect x="4" y="4" width="2.4" height="2.4" fill="#9fc4e0"/><rect x="0" y="8" width="2.4" height="2.4" fill="#9fc4e0"/><rect x="4" y="8" width="2.4" height="2.4" fill="#9fc4e0"/><rect x="8" y="8" width="2.4" height="2.4" fill="#9fc4e0"/><rect x="0" y="12" width="2.4" height="2.4" fill="#9fc4e0"/><rect x="4" y="12" width="2.4" height="2.4" fill="#9fc4e0"/><rect x="8" y="12" width="2.4" height="2.4" fill="#9fc4e0"/><rect x="12" y="12" width="2.4" height="2.4" fill="#9fc4e0"/></svg>
<div style="left:0px;top:984px;width:1280px;height:5px;background:linear-gradient(180deg,#2e2c2e 0%,#625a5c 30%,#5e5658 78%,#2a2a34 100%)"></div>
<div style="left:0px;top:989px;width:1280px;height:35px;background:linear-gradient(180deg,#2f68d8 0%,#4a92f0 5%,#438aee 13%,#2d6ce0 22%,#255fda 70%,#2459d2 84%,#1d46ae 90%,#183a98 100%)"></div>
<div style="left:0px;top:994px;width:96px;height:25px;border-radius:0 7px 12px 0/0 8px 16px 0;background:linear-gradient(180deg,#86c486 0%,#5aae5a 10%,#3a9c3c 24%,#339836 60%,#2c8a30 85%,#257a2a 100%);box-shadow:inset 0 1px 1px rgba(255,255,255,.3), 0 3px 0 #1b5a2e, 2px 1px 2px rgba(0,20,90,.5)"></div>
<div style="left:0px;top:989px;width:6px;height:35px;background:linear-gradient(90deg,rgba(255,255,255,.28),rgba(255,255,255,.12))"></div>
<svg style="left:11px;top:999px" width="19" height="18" viewBox="0 0 22 22"><path d="M2 4 Q6 2 10 4 L9 10 Q5 8 1 10 Z" fill="#e8542a"/><path d="M11.5 4.5 Q16 6 20 4 L19 10 Q15 12 10.5 10 Z" fill="#7cc84a"/><path d="M1 11.5 Q5 9.5 9 11.5 L8 17.5 Q4 15.5 0 17.5 Z" fill="#4a8ae8"/><path d="M10.2 12 Q15 14 19 12 L18 18 Q14 20 9.2 18 Z" fill="#f4c83a"/></svg>
<div class="t" style="left:37px;top:996px;font-size:19px;line-height:22px;font-style:italic;font-weight:300;color:#fff;letter-spacing:0px;text-shadow:1px 1px 2px rgba(0,40,0,.6);transform:skewX(-10deg)">开始</div>
<svg style="left:105px;top:998px" width="5" height="22" viewBox="0 0 5 22"><rect x="0" y="0" width="2" height="2" fill="#1a3fa8"/><rect x="1" y="1" width="1" height="1" fill="#5a90f0"/><rect x="2" y="3" width="2" height="2" fill="#1a3fa8"/><rect x="3" y="4" width="1" height="1" fill="#5a90f0"/><rect x="0" y="6" width="2" height="2" fill="#1a3fa8"/><rect x="1" y="7" width="1" height="1" fill="#5a90f0"/><rect x="2" y="9" width="2" height="2" fill="#1a3fa8"/><rect x="3" y="10" width="1" height="1" fill="#5a90f0"/><rect x="0" y="12" width="2" height="2" fill="#1a3fa8"/><rect x="1" y="13" width="1" height="1" fill="#5a90f0"/><rect x="2" y="15" width="2" height="2" fill="#1a3fa8"/><rect x="3" y="16" width="1" height="1" fill="#5a90f0"/><rect x="0" y="18" width="2" height="2" fill="#1a3fa8"/><rect x="1" y="19" width="1" height="1" fill="#5a90f0"/></svg>
<svg style="left:209px;top:998px" width="5" height="22" viewBox="0 0 5 22"><rect x="0" y="0" width="2" height="2" fill="#1a3fa8"/><rect x="1" y="1" width="1" height="1" fill="#5a90f0"/><rect x="2" y="3" width="2" height="2" fill="#1a3fa8"/><rect x="3" y="4" width="1" height="1" fill="#5a90f0"/><rect x="0" y="6" width="2" height="2" fill="#1a3fa8"/><rect x="1" y="7" width="1" height="1" fill="#5a90f0"/><rect x="2" y="9" width="2" height="2" fill="#1a3fa8"/><rect x="3" y="10" width="1" height="1" fill="#5a90f0"/><rect x="0" y="12" width="2" height="2" fill="#1a3fa8"/><rect x="1" y="13" width="1" height="1" fill="#5a90f0"/><rect x="2" y="15" width="2" height="2" fill="#1a3fa8"/><rect x="3" y="16" width="1" height="1" fill="#5a90f0"/><rect x="0" y="18" width="2" height="2" fill="#1a3fa8"/><rect x="1" y="19" width="1" height="1" fill="#5a90f0"/></svg>
<svg style="left:1091px;top:998px" width="5" height="22" viewBox="0 0 5 22"><rect x="0" y="0" width="2" height="2" fill="#1a3fa8"/><rect x="1" y="1" width="1" height="1" fill="#5a90f0"/><rect x="2" y="3" width="2" height="2" fill="#1a3fa8"/><rect x="3" y="4" width="1" height="1" fill="#5a90f0"/><rect x="0" y="6" width="2" height="2" fill="#1a3fa8"/><rect x="1" y="7" width="1" height="1" fill="#5a90f0"/><rect x="2" y="9" width="2" height="2" fill="#1a3fa8"/><rect x="3" y="10" width="1" height="1" fill="#5a90f0"/><rect x="0" y="12" width="2" height="2" fill="#1a3fa8"/><rect x="1" y="13" width="1" height="1" fill="#5a90f0"/><rect x="2" y="15" width="2" height="2" fill="#1a3fa8"/><rect x="3" y="16" width="1" height="1" fill="#5a90f0"/><rect x="0" y="18" width="2" height="2" fill="#1a3fa8"/><rect x="1" y="19" width="1" height="1" fill="#5a90f0"/></svg>
<svg style="left:118px;top:1000px" width="18" height="18" viewBox="0 0 18 18"><rect x="2" y="2" width="13" height="14" rx="2" fill="#eaf2fa" stroke="#2a5aa0" stroke-width="1.4"/><path d="M5 11 L8 8 L10 10 L13 5" stroke="#2a4a8a" stroke-width="1.6" fill="none"/><circle cx="14.5" cy="4" r="2" fill="#d84a2a"/></svg>
<svg style="left:141px;top:1000px" width="18" height="18" viewBox="0 0 18 18"><circle cx="9" cy="9" r="8.5" fill="#f07a28"/><circle cx="9" cy="9" r="8.5" fill="none" stroke="#f6b07a" stroke-width="1"/><path d="M3 11 Q6 5 11 4 Q9 6 12 6 Q15 7 14 11 Q12 9 10 11 Q8 14 5 13 Z" fill="#fff5ea"/></svg>
<svg style="left:164px;top:998px" width="20" height="20" viewBox="0 0 20 20"><circle cx="10" cy="11" r="6.5" fill="none" stroke="#3aa0e8" stroke-width="3.2"/><path d="M4 11 H16" stroke="#3aa0e8" stroke-width="2.6"/><path d="M12 12 H17 V15 H12Z" fill="#2a62d4"/><ellipse cx="10" cy="10" rx="10" ry="4" transform="rotate(-30 10 10)" fill="none" stroke="#f0c02a" stroke-width="1.6"/></svg>
<div class="t" style="left:191px;top:996px;font-size:13px;font-weight:bold;color:#cfe0ff;line-height:14px">»</div>
<div class="task" style="left:219px"><span>PD...</span></div>
<svg style="left:225px;top:1000px" width="18" height="18" viewBox="0 0 18 18"><circle cx="9" cy="9" r="8.5" fill="#f07a28"/><circle cx="9" cy="9" r="8.5" fill="none" stroke="#f6b07a" stroke-width="1"/><path d="M3 11 Q6 5 11 4 Q9 6 12 6 Q15 7 14 11 Q12 9 10 11 Q8 14 5 13 Z" fill="#fff5ea"/></svg>
<div class="task" style="left:298px"><span>电...</span></div>
<svg style="left:304px;top:1000px" width="18" height="18" viewBox="0 0 18 18"><rect x="4" y="3" width="12" height="14" fill="#f6c64a" stroke="#d89a1a" stroke-width="1"/><rect x="6" y="5" width="5" height="10" fill="#fbe08a"/><circle cx="4" cy="3.5" r="2.6" fill="#d8441c"/></svg>
<div class="task" style="left:377px"><span>新...</span></div>
<svg style="left:383px;top:1000px" width="18" height="18" viewBox="0 0 18 18"><circle cx="9" cy="9" r="8.5" fill="#f07a28"/><circle cx="9" cy="9" r="8.5" fill="none" stroke="#f6b07a" stroke-width="1"/><path d="M3 11 Q6 5 11 4 Q9 6 12 6 Q15 7 14 11 Q12 9 10 11 Q8 14 5 13 Z" fill="#fff5ea"/></svg>
<div class="task" style="left:456px"><span>Pr...</span></div>
<svg style="left:462px;top:1000px" width="18" height="18" viewBox="0 0 18 18"><path d="M2 5 L9 8 L8 14 L1 11Z" fill="#e8542a"/><path d="M9 8 L16 4 L17 10 L8 14Z" fill="#7cc84a"/><path d="M4 4 L14 14 M14 4 L4 14" stroke="#f0e6d0" stroke-width="1.5" opacity=".8"/></svg>
<div class="task" style="left:535px"><span>综...</span></div>
<svg style="left:541px;top:1001px" width="18" height="16" viewBox="0 0 18 16"><path d="M1 3 H7 L9 5 H16 V14 H1 Z" fill="#e8b838" stroke="#9a741a" stroke-width=".8"/><path d="M1 14 L3.5 7 H17.5 L16 14 Z" fill="#fbe690" stroke="#a07c20" stroke-width=".8"/></svg>
<div class="task" style="left:614px"><span>酒...</span></div>
<svg style="left:620px;top:1000px" width="18" height="18" viewBox="0 0 18 18"><circle cx="9" cy="9" r="8.5" fill="#12264a"/><circle cx="9" cy="9" r="5.5" fill="#3a78b8"/><path d="M6 7 Q9 5 11 8 Q10 12 7 11Z" fill="#8ac0a0"/></svg>
<div class="task" style="left:693px"><span>企...</span></div>
<svg style="left:699px;top:1000px" width="18" height="18" viewBox="0 0 18 18"><rect x="4" y="3" width="12" height="14" fill="#f6c64a" stroke="#d89a1a" stroke-width="1"/><rect x="6" y="5" width="5" height="10" fill="#fbe08a"/><circle cx="4" cy="3.5" r="2.6" fill="#d8441c"/></svg>
<div class="task" style="left:772px"><span>Er...</span></div>
<svg style="left:778px;top:1000px" width="20" height="18" viewBox="0 0 20 18"><path d="M10 9 C7 4 2 5 2 9 C2 13 7 14 10 9 C13 4 18 5 18 9 C18 13 13 14 10 9Z" fill="none" stroke="#8a3aa8" stroke-width="2.4"/></svg>
<div class="task" style="left:851px"><span>51...</span></div>
<svg style="left:857px;top:1000px" width="18" height="18" viewBox="0 0 18 18"><rect x="3" y="1" width="13" height="16" fill="#f4f8ff" stroke="#6a7a9a" stroke-width="1"/><rect x="1" y="5" width="9" height="8" fill="#2a58b0"/><path d="M2.5 7 L4 11.5 L5.5 8 L7 11.5 L8.5 7" stroke="#fff" stroke-width="1.1" fill="none"/></svg>
<div class="task" style="left:930px"><span>近...</span></div>
<svg style="left:936px;top:1001px" width="18" height="16" viewBox="0 0 18 16"><path d="M1 3 H7 L9 5 H16 V14 H1 Z" fill="#e8b838" stroke="#9a741a" stroke-width=".8"/><path d="M1 14 L3.5 7 H17.5 L16 14 Z" fill="#fbe690" stroke="#a07c20" stroke-width=".8"/></svg>
<div style="left:1008px;top:998px;width:78px;height:22px;border-radius:3px;background:linear-gradient(180deg,#1a48a8 0%,#1f50b8 30%,#2256c2 100%);box-shadow:inset 1px 1px 1px rgba(0,0,40,.55)"></div>
<svg style="left:1017px;top:1001px" width="16" height="17" viewBox="0 0 16 16"><ellipse cx="3.2" cy="8" rx="2.2" ry="6.3" fill="url(#ai)"/><ellipse cx="8" cy="8" rx="2.2" ry="6.8" fill="url(#ai)"/><ellipse cx="12.8" cy="8" rx="2.2" ry="6.3" fill="url(#ai)"/></svg>
<div class="t" style="left:1038px;top:1003px;font-family:'Liberation Mono',monospace;font-size:12px;line-height:14px;color:#fff;letter-spacing:-1.4px">M9700</div>
<svg style="left:1105px;top:1004px" width="14" height="11" viewBox="0 0 14 11"><path d="M2 0 Q5 1 8 0" stroke="#222" fill="none"/><rect x="0" y="2" width="14" height="9" rx="1" fill="#f2f2f2" stroke="#333" stroke-width=".8"/><path d="M2 4.5 H12 M2 6.5 H12 M3 8.7 H11" stroke="#333" stroke-width="1" stroke-dasharray="1.2 .8"/></svg>
<div style="left:1131px;top:990px;width:149px;height:34px;background:linear-gradient(180deg,#1a78d8 0%,#3aa2f4 8%,#1f92ee 22%,#178ae8 75%,#157fd8 90%,#0f5fb0 100%);box-shadow:inset 1px 0 0 #0f52a8"></div>
<svg style="left:1122px;top:998px" width="19" height="19" viewBox="0 0 19 19"><circle cx="9.5" cy="9.5" r="9" fill="#2a86e8" stroke="#8ac4f8" stroke-width="1"/><path d="M11.5 5 L7 9.5 L11.5 14" stroke="#fff" stroke-width="2.2" fill="none"/></svg>
<svg style="left:1142px;top:1000px" width="16" height="17" viewBox="0 0 16 17"><ellipse cx="8" cy="10" rx="6.5" ry="6.5" fill="#1a1a1a"/><ellipse cx="8" cy="5" rx="4.2" ry="4.6" fill="#1a1a1a"/><ellipse cx="8" cy="11.5" rx="4" ry="4.5" fill="#f4f4f4"/><path d="M2.5 8.5 Q8 6.5 13.5 8.5 L13 11 Q8 9 3 11Z" fill="#e8281a"/><ellipse cx="8" cy="6.8" rx="2.2" ry="1" fill="#f4a81a"/><ellipse cx="4.5" cy="16" rx="2.6" ry="1" fill="#f4a81a"/><ellipse cx="11.5" cy="16" rx="2.6" ry="1" fill="#f4a81a"/></svg>
<svg style="left:1160px;top:1000px" width="16" height="17" viewBox="0 0 16 17"><ellipse cx="8" cy="10" rx="6.5" ry="6.5" fill="#1a1a1a"/><ellipse cx="8" cy="5" rx="4.2" ry="4.6" fill="#1a1a1a"/><ellipse cx="8" cy="11.5" rx="4" ry="4.5" fill="#f4f4f4"/><path d="M2.5 8.5 Q8 6.5 13.5 8.5 L13 11 Q8 9 3 11Z" fill="#e8281a"/><ellipse cx="8" cy="6.8" rx="2.2" ry="1" fill="#f4a81a"/><ellipse cx="4.5" cy="16" rx="2.6" ry="1" fill="#f4a81a"/><ellipse cx="11.5" cy="16" rx="2.6" ry="1" fill="#f4a81a"/></svg>
<div class="t" style="left:1177px;top:999px;font-family:'Liberation Serif',serif;font-weight:bold;font-size:17px;line-height:18px;color:#18c818;text-shadow:0 0 1px #063">R</div>
<svg style="left:1195px;top:1000px" width="18" height="18" viewBox="0 0 18 18"><rect x="1" y="5" width="8" height="8" fill="#dce8f8" stroke="#8aa" stroke-width=".8"/><rect x="0" y="14" width="10" height="2.5" fill="#c8d4e8"/><path d="M11 4 Q13 7 11 10 M13.5 2.5 Q16.5 7 13.5 11.5" stroke="#3ae03a" stroke-width="1.5" fill="none"/></svg>
<svg style="left:1214px;top:1000px" width="17" height="18" viewBox="0 0 17 18"><rect x="0" y="1" width="16" height="16" fill="#1a50c0"/><path d="M2 6 Q5 3 8 6 Q11 9 14 4 M4 9 Q8 16 12 8" stroke="#fff" stroke-width="1.6" fill="none"/></svg>
<div class="t" style="left:1240px;top:1002px;font-size:11px;line-height:14px;color:#fff;letter-spacing:.2px">9:31</div>
<div class="t" style="left:1136px;top:987px;font-size:15.5px;line-height:18px;color:#fff;letter-spacing:.25px;text-shadow:0 0 1px rgba(255,255,255,.5)">www.taskcity.com</div>
</body></html>
